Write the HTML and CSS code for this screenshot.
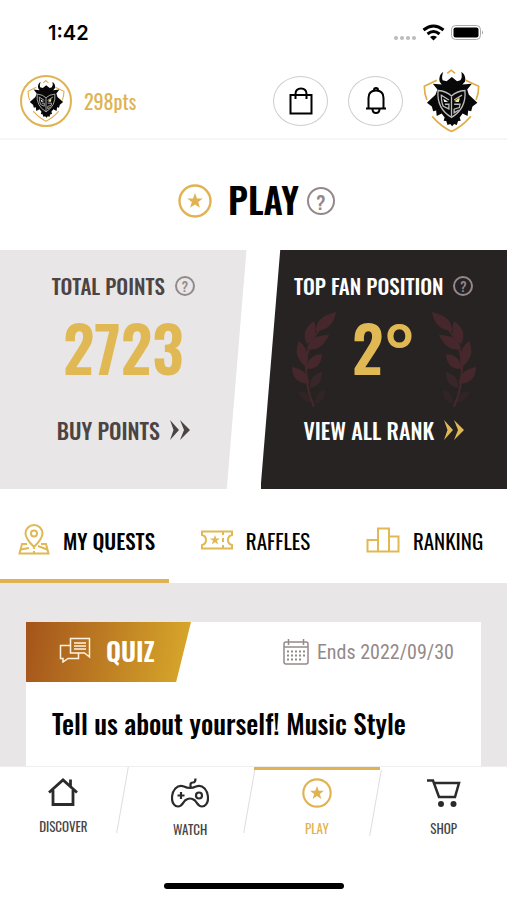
FILE: index.html
```html
<!DOCTYPE html>
<html lang="en">

<head>
  <meta charset="UTF-8">
  <meta name="viewport" content="width=device-width, initial-scale=1.0">
  <title>Play</title>
  <link rel="stylesheet" href="styles.css">
</head>

<body>
  <!-- shared shapes -->
  <svg class="defs" aria-hidden="true">
    <symbol id="logo" viewBox="4 4 174 194">
      <path d="M78 17l12-10 12 10M46 38L8 56q0 24 8 42M134 38l40 18q0 24-8 42M32 148q28 32 59 46 31-14 59-46" fill="none" stroke="#e0ac45" stroke-width="5"/>
      <path d="M66 12Q50 24 55 42l6 9-27-3 14 18-6 16-26 24 15 12 4 14 9-2 2 17 15-8 9 12-3 10 8 1 4 12 8-3 6 7 6-7 8 3 4-12 8-1-3-10 9-12 15 8 2-17 9 2 4-14 15-12-26-24-5-16 14-18-29 3 8-9q5-18-11-30 4 18-3 26l-10 3-16-13-16 13-12-3Q60 28 66 12z" fill="#080808"/>
      <path d="M50 69q26 2 41 17 15-15 41-17 5 55-41 82-46-27-41-82z" fill="#080808" stroke="#bbb" stroke-width="4"/>
      <path d="M91 88v60M58 82l25 16M60 84q0 22 6 33l17 8v-14H71M123 83l-24 15M99 111h18l-2 10-16 5v11l14-8" fill="none" stroke="#bbb" stroke-width="4"/>
      <path d="M66 94l15 9-12 1zM116 94l-15 9 12 1z" fill="#fff"/>
      <path d="M99 102l17-12-3 10z" fill="#f3e169"/>
    </symbol>
    <symbol id="star" viewBox="0 0 34 34">
      <circle cx="17" cy="17" r="15.5" fill="none" stroke="currentColor" stroke-width="2.4"/>
      <path d="M17 9l2 5.500h5.800l-4.600 3.600 1.700 5.700-4.900-3.400-4.900 3.400 1.700-5.700-4.600-3.600H15z" fill="currentColor"/>
    </symbol>
    <symbol id="more" viewBox="0 0 20 20">
      <path d="M0 0l9 10-9 10 3.500-10zM10 0l10 10-10 10 4-10z" fill="currentColor"/>
    </symbol>
    <symbol id="laurel" viewBox="0 0 44 96">
      <path d="M39 5Q14 27 14 55q0 22 8 40" fill="none" stroke="currentColor" stroke-width="2"/>
      <path d="M44 0Q23 5 24 19 41 18 44 0zM22 9Q8 19 15 32 27 24 22 9zM37 23Q17 23 15 37q14 3 22-14zM7 29Q0 44 14 55 20 40 7 29zM30 42Q16 43 14 57q15 1 16-15zM0 55q0 16 17 17Q17 58 0 55z" fill="currentColor"/>
      <path d="M30 60Q17 63 18 76q12-2 12-16z" fill="currentColor" opacity=".6"/>
      <path d="M6 79q4 13 16 11Q18 79 6 79zM33 78q-10 1-10 14 10-1 10-14z" fill="currentColor" opacity=".3"/>
    </symbol>
  </svg>

  <div class="app">
    <div class="status">
      <span class="time">1:42</span>
      <svg class="signal" viewBox="0 0 91 18" aria-hidden="true">
        <g fill="#bbb"><circle cx="4" cy="14" r="2"/><circle cx="10" cy="14" r="2"/><circle cx="16" cy="14" r="2"/><circle cx="22" cy="14" r="2"/></g>
        <path d="M31.500 6q10-8 20 0M35.500 10q6-5 12 0" fill="none" stroke="#000" stroke-width="3"/>
        <path d="M38 13q3.500-2.500 7 0L41.500 16.500z"/>
        <rect x="59.500" y="1.500" width="29" height="14" rx="4" fill="none" stroke="#aaa"/>
        <rect x="61.500" y="3.500" width="25" height="10" rx="2"/>
        <path d="M90 6.500q2 2 0 4z" fill="#999"/>
      </svg>
    </div>

    <header class="header">
      <a class="profile" href="#profile">
        <span class="avatar"><svg aria-hidden="true"><use href="#logo"/></svg></span>
        <span>298pts</span>
      </a>
      <div class="actions">
        <button class="pill" type="button" aria-label="Bag">
          <svg width="24" height="28" viewBox="0 0 24 28"><path d="M1.500 8h21v18.500h-21zM6.500 12V7q0-5.500 5.500-5.500T17.500 7v5" fill="none" stroke="#000" stroke-width="2"/></svg>
        </button>
        <button class="pill" type="button" aria-label="Notifications">
          <svg width="22" height="28" viewBox="0 0 22 28"><path d="M1 21.500h20M3.500 21V11q0-7.500 7.500-7.500t7.500 7.500v10M9 3q0-2 2-2t2 2M7.500 22q0 4 3.500 4t3.500-4" fill="none" stroke="#000" stroke-width="2"/></svg>
        </button>
        <a class="brand" href="#home" aria-label="Home"><svg><use href="#logo"/></svg></a>
      </div>
    </header>

    <main class="content">
      <div class="title">
        <svg class="title-star" aria-hidden="true"><use href="#star"/></svg>
        <h1>PLAY</h1>
        <button class="help help-big" type="button">?</button>
      </div>

      <div class="panels">
        <section class="panel panel-points">
          <h2>TOTAL POINTS <button class="help" type="button">?</button></h2>
          <p class="value">2723</p>
          <a class="panel-link" href="#buy">BUY POINTS <svg class="more"><use href="#more"/></svg></a>
        </section>
        <section class="panel panel-rank">
          <h2>TOP FAN POSITION <button class="help" type="button">?</button></h2>
          <div class="rank">
            <svg class="laurel" aria-hidden="true"><use href="#laurel"/></svg>
            <p class="value">2°</p>
            <svg class="laurel flip" aria-hidden="true"><use href="#laurel"/></svg>
          </div>
          <a class="panel-link" href="#rank">VIEW ALL RANK <svg class="more"><use href="#more"/></svg></a>
        </section>
      </div>

      <nav class="tabs">
        <a class="tab active" href="#quests">
          <svg width="32" height="32" viewBox="0 0 32 32"><path d="M16 23Q7.500 14.500 7.500 9.500a8.500 8.500 0 0 1 17 0Q24.500 14.500 16 23zM9 20H4L1.500 29.500h29L28 20h-5M3 25.500l8-1.500M16 24v1m0 2v2M20 22l9 3.500"/><circle cx="16" cy="9.500" r="3"/></svg>
          MY QUESTS
        </a>
        <a class="tab" href="#raffles">
          <svg width="32" height="20" viewBox="0 0 32 20"><path d="M1 1.500h30V5q-4 1-4 5t4 5v3.500H1V15q4-1 4-5T1 5zM22 1v4m0 3v4m0 3v4"/><path d="M14 5l1.300 3.600H19l-3 2.200 1.200 3.700-3.200-2.300-3.200 2.300 1.200-3.700-3-2.200h3.700z" class="solid"/></svg>
          RAFFLES
        </a>
        <a class="tab" href="#ranking">
          <svg width="34" height="26" viewBox="0 0 34 26"><path d="M1.500 13H12v11.500H1.500zM12 1.500h11v23H12zM23 9.500h9.500v15H23z"/></svg>
          RANKING
        </a>
      </nav>

      <div class="list">
        <article class="card">
          <div class="card-top">
            <div class="badge">
              <svg width="32" height="26" viewBox="0 0 32 26"><path d="M11.500 1.500h19V20l-5-4h-14zM11.500 8.500H1.500v13H4V25l5-3.500h10.500V16M15 6h12M15 9h12M15 12h12" fill="none" stroke="#fff3df" stroke-width="1.500"/></svg>
              QUIZ
            </div>
            <div class="ends">
              <svg width="26" height="26" viewBox="0 0 26 26"><rect x="1" y="3" width="24" height="22" rx="2" fill="none" stroke="currentColor" stroke-width="1.500"/><path d="M1 8h24M5.500 0v6M20.500 0v6" fill="none" stroke="currentColor" stroke-width="1.500"/><path d="M4 12.500h18M4 16.500h18M4 20.500h15" fill="none" stroke="currentColor" stroke-width="2" stroke-dasharray="2 2"/></svg>
              Ends 2022/09/30
            </div>
          </div>
          <h3>Tell us about yourself! Music Style</h3>
        </article>
      </div>
    </main>

    <nav class="bottom">
      <a class="item" href="#discover">
        <svg width="30" height="28" viewBox="0 0 30 28"><path d="M1 14.500L15 2l14 12.500M5 12v14.500h20V12M22.500 8V1.500" fill="none" stroke="#2b2b2b" stroke-width="2.800"/></svg>
        DISCOVER
      </a>
      <a class="item" href="#watch">
        <svg width="38" height="31" viewBox="0 0 38 31" fill="none" stroke="#2b2b2b" stroke-width="2.200"><path d="M19 10q3 0 6-1.500c7-2.500 12 4 12 12 0 5-3 8-6 8-4 0-5-4-7-6-2-1.500-3-2-5-2s-3 .5-5 2c-2 2-3 6-7 6-3 0-6-3-6-8 0-8 5-14.500 12-12Q16 10 19 10zM19.500 10V6.500q0-2 2.500-2 2.500 0 2.500-4M6.500 17.500h7M10 14v7"/><circle cx="28" cy="17.500" r="3"/></svg>
        WATCH
      </a>
      <a class="item active" href="#play">
        <svg width="30" height="30"><use href="#star"/></svg>
        PLAY
      </a>
      <a class="item" href="#shop">
        <svg width="34" height="30" viewBox="0 0 34 30"><path d="M0 2.500h6L12 19h16l4-14H8" fill="none" stroke="#2b2b2b" stroke-width="2.500"/><circle cx="14" cy="26" r="3" fill="#2b2b2b"/><circle cx="26.500" cy="26" r="3" fill="#2b2b2b"/></svg>
        SHOP
      </a>
    </nav>
    <div class="indicator"></div>
  </div>
</body>

</html>
```
FILE: styles.css
```css
* {
  box-sizing: border-box;
}

body {
  margin: 0;
  background: #fff;
  color: #000;
  font-family: Oswald, "Roboto Condensed", "Liberation Sans Narrow", "Liberation Sans", sans-serif;
}

a {
  color: inherit;
  text-decoration: none;
}

button {
  padding: 0;
  background: none;
  font: inherit;
  cursor: pointer;
}

h1, h2, h3, p {
  margin: 0;
}

svg {
  flex: none;
}

.defs {
  position: absolute;
  width: 0;
  height: 0;
}

.app {
  display: flex;
  flex-direction: column;
  height: 100vh;
  overflow: hidden;
}

/* STATUS + HEADER */
.status {
  display: flex;
  align-items: center;
  justify-content: space-between;
  height: 64px;
  padding: 2px 24px 0 48px;
}

.time {
  font-family: Inter, sans-serif;
  font-size: 20px;
  font-weight: 600;
}

.signal {
  width: 91px;
  height: 18px;
}

.header {
  display: flex;
  align-items: center;
  justify-content: space-between;
  height: 76px;
  padding: 0 27px 0 20px;
  border-bottom: 2px solid #f6f6f6;
}

.profile {
  display: flex;
  align-items: center;
  gap: 12px;
  color: #e0b252;
  font-size: 20px;
  font-weight: 400;
}

.avatar {
  display: flex;
  align-items: center;
  justify-content: center;
  width: 52px;
  height: 52px;
  border: 2px solid #e0b252;
  border-radius: 50%;
}

.avatar svg {
  width: 38px;
  height: 42px;
}

.actions {
  display: flex;
  align-items: center;
  gap: 20px;
}

.pill {
  display: flex;
  align-items: center;
  justify-content: center;
  width: 55px;
  height: 50px;
  border: 1px solid #ccc;
  border-radius: 50%;
}

.brand svg {
  display: block;
  width: 57px;
  height: 64px;
}

/* TITLE */
.content {
  flex: 1;
  min-height: 0;
  overflow: hidden;
  background: #e8e6e7;
}

.title {
  display: flex;
  align-items: center;
  justify-content: center;
  height: 110px;
  padding: 12px 0 0 6px;
  background: #fff;
}

.title-star {
  width: 34px;
  height: 34px;
  margin-right: 16px;
  color: #e0b252;
}

h1 {
  padding-bottom: 4px;
  font-size: 36px;
  font-weight: 600;
  line-height: 48px;
}

.help {
  width: 20px;
  height: 20px;
  border: 2px solid #94898a;
  border-radius: 50%;
  color: #94898a;
  font-size: 13px;
  font-weight: 500;
  line-height: 16px;
}

.help-big {
  width: 28px;
  height: 28px;
  margin-left: 8px;
  font-size: 19px;
  line-height: 24px;
}

/* PANELS */
.panels {
  display: grid;
  grid-template-columns: 1fr 1fr;
  gap: 14px;
  background: #fff;
}

.panel {
  display: flex;
  flex-direction: column;
  align-items: center;
  height: 239px;
  padding-top: 20px;
}

.panel-points {
  background: #e8e6e7;
  color: #4c4343;
  clip-path: polygon(0 0, 100% 0, 92% 100%, 0 100%);
}

.panel-rank {
  background: #272323;
  color: #fff;
  clip-path: polygon(8% 0, 100% 0, 100% 100%, 0 100%);
}

h2, .panel-link {
  display: flex;
  align-items: center;
  gap: 10px;
  font-size: 21px;
  font-weight: 500;
  line-height: 32px;
}

.value {
  height: 112px;
  color: #e0b955;
  font-size: 62px;
  font-weight: 600;
  line-height: 90px;
}

.panel-link {
  font-size: 22px;
}

.more {
  width: 20px;
  height: 20px;
}

.panel-rank .more {
  color: #e0b955;
}

.rank {
  display: flex;
  align-items: flex-start;
  justify-content: space-between;
  width: 184px;
}

.laurel {
  width: 44px;
  height: 96px;
  margin-top: 10px;
  color: #46282c;
}

.flip {
  transform: scaleX(-1);
}

/* TABS */
.tabs {
  display: grid;
  grid-template-columns: repeat(3, 1fr);
  height: 94px;
  background: #fff;
}

.tab {
  display: flex;
  align-items: center;
  justify-content: center;
  gap: 13px;
  padding: 12px 0 0 4px;
  border-bottom: 4px solid transparent;
  font-size: 21px;
  font-weight: 400;
}

.tab svg {
  fill: none;
  stroke: #e0b955;
  stroke-width: 2;
}

.tab .solid {
  fill: #e0b955;
  stroke: none;
}

.tab.active {
  border-color: #e0b252;
  font-weight: 500;
}

/* QUESTS */
.list {
  padding: 39px 26px;
}

.card {
  background: #fff;
  padding-bottom: 40px;
}

.card-top {
  display: flex;
  justify-content: space-between;
  align-items: center;
  padding-right: 27px;
}

.badge {
  display: flex;
  align-items: center;
  gap: 15px;
  width: 165px;
  height: 60px;
  padding: 0 0 4px 33px;
  background: linear-gradient(100deg, #a4541b, #d9aa2b);
  clip-path: polygon(0 0, 100% 0, 91% 100%, 0 100%);
  color: #fff;
  font-size: 26px;
  font-weight: 600;
}

.ends {
  display: flex;
  align-items: center;
  gap: 8px;
  color: #94898a;
  font-family: "Roboto Condensed", "Liberation Sans Narrow", Roboto, sans-serif;
  font-size: 20px;
}

h3 {
  padding: 21px 26px 0;
  font-size: 27px;
  font-weight: 500;
  line-height: 40px;
}

/* BOTTOM NAV */
.bottom {
  display: grid;
  grid-template-columns: repeat(4, 1fr);
  height: 117px;
  border-top: 1px solid #eee;
  background: #fff;
}

.item {
  position: relative;
  display: flex;
  flex-direction: column;
  align-items: center;
  gap: 11px;
  padding-top: 11px;
  color: #444;
  font-size: 13px;
  line-height: 18px;
}

.item:not(:last-child)::after {
  content: "";
  position: absolute;
  top: 0;
  right: 4px;
  width: 1px;
  height: 66px;
  background: #ddd;
  transform: skewX(-10deg);
}

.item.active {
  padding-top: 8px;
  border-top: 3px solid #e0b252;
  color: #e0b252;
}

.indicator {
  width: 180px;
  height: 6px;
  margin: 0 auto 11px;
  border-radius: 3px;
  background: #000;
}
```
